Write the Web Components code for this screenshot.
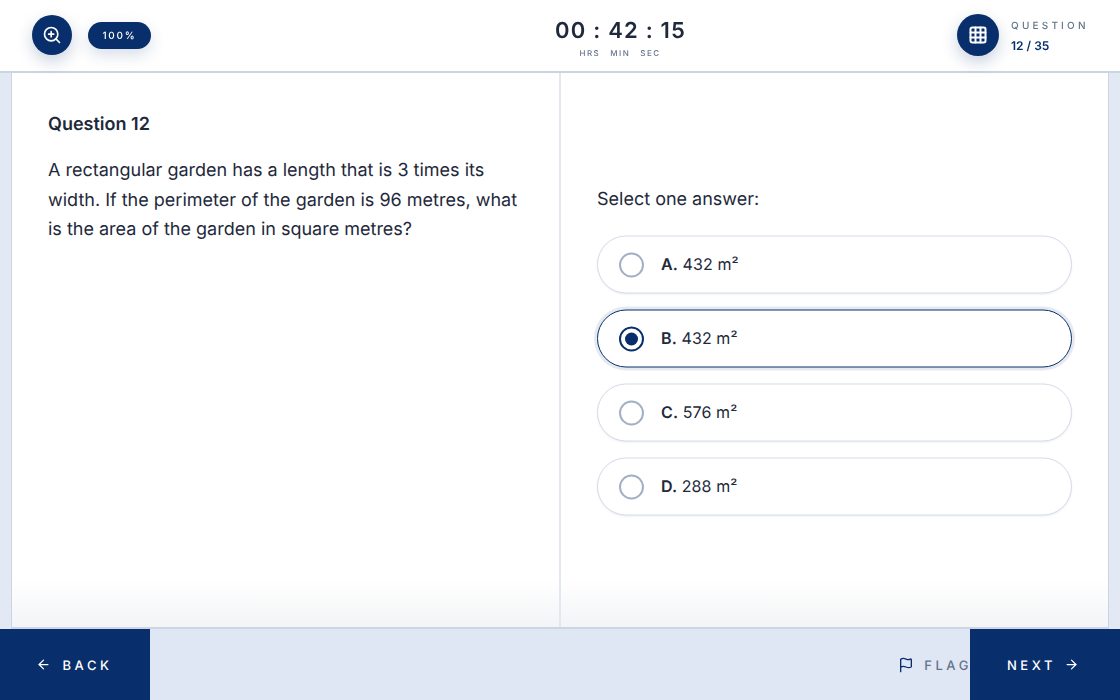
<!DOCTYPE html>
<html lang="en">
<head>
<meta charset="utf-8">
<title>Exam</title>
<style>
    html, body {
        margin: 0;
        height: 100%;
    }
    body {
        font-family: Inter, "Liberation Sans", sans-serif;
        color: #1e293b;
        background: #e2e8f4;
        text-rendering: geometricPrecision;
        -webkit-font-smoothing: antialiased;
    }
</style>
</head>
<body>
<exam-app>
    <exam-header slot="header"></exam-header>
    <question-pane slot="left" heading="Question 12">
        A rectangular garden has a length that is 3 times its width. If the perimeter of the garden is 96 metres, what is the area of the garden in square metres?
    </question-pane>
    <answer-pane slot="right" prompt="Select one answer:">
        <answer-option letter="A.">432 m²</answer-option>
        <answer-option letter="B." selected>432 m²</answer-option>
        <answer-option letter="C.">576 m²</answer-option>
        <answer-option letter="D.">288 m²</answer-option>
    </answer-pane>
    <exam-footer slot="footer"></exam-footer>
</exam-app>
<script>
class ExamApp extends HTMLElement {
    constructor() {
        super();
        const shadow = this.attachShadow({mode: "open"});
        shadow.innerHTML = `
        <style>
        :host {
            display: flex;
            flex-direction: column;
            height: 700px;
            overflow: hidden;
        }
        main {
            flex: 1;
            min-height: 0;
            display: flex;
            padding: 0 11px;
        }
        .card {
            flex: 1;
            display: grid;
            grid-template-columns: 549px 1fr;
            background: linear-gradient(to bottom, #fff calc(100% - 48px), #f3f4f6);
            border: solid #cdd4e3;
            border-width: 0 1px 2px 1px;
            transform: translateZ(0);
        }
        </style>
        <slot name="header"></slot>
        <main>
            <div class="card">
                <slot name="left"></slot>
                <slot name="right"></slot>
            </div>
        </main>
        <slot name="footer"></slot>
        `
    }
}

class ExamHeader extends HTMLElement {
    constructor() {
        super();
        const shadow = this.attachShadow({mode: "open"});
        shadow.innerHTML = `
        <style>
        :host {
            display: grid;
            grid-template-columns: 523px auto 1fr;
            align-items: center;
            height: 70px;
            background: #fff;
            border-bottom: 2px solid #cbd5e1;
            position: relative;
            z-index: 1;
            padding: 0 32px 1px;
        }
        .left, .right {
            display: flex;
            align-items: center;
        }
        .left {
            gap: 16px;
        }
        .right {
            justify-content: flex-end;
            gap: 12px;
        }
        .round {
            display: flex;
            align-items: center;
            justify-content: center;
            border-radius: 50%;
            background: #082f6b;
            box-shadow: 0 6px 16px rgba(8, 47, 107, .22);
        }
        .zoom {
            width: 40px;
            height: 40px;
        }
        .grid {
            width: 42px;
            height: 42px;
        }
        .pill {
            box-sizing: border-box;
            display: flex;
            align-items: center;
            justify-content: center;
            width: 63px;
            height: 27px;
            padding-top: 1px;
            border-radius: 14px;
            background: #082f6b;
            color: #fff;
            font-size: 10px;
            font-weight: 500;
            letter-spacing: 1.8px;
            box-shadow: 0 6px 16px rgba(8, 47, 107, .16);
        }
        .timer {
            text-align: center;
        }
        .digits {
            font-size: 22px;
            font-weight: 600;
            letter-spacing: 1.2px;
            line-height: 28px;
            margin-top: 5px;
        }
        .units {
            display: flex;
            justify-content: center;
            gap: 10px;
            margin-top: 3px;
            margin-left: -1px;
            font-size: 8px;
            font-weight: 500;
            letter-spacing: 1.5px;
            line-height: 10px;
            color: #64748b;
        }
        .count {
            width: 77px;
        }
        .label {
            font-size: 10px;
            font-weight: 500;
            letter-spacing: 3.2px;
            color: #64748b;
            line-height: 12px;
            margin-top: 3px;
        }
        .value {
            margin-top: 6px;
            font-size: 12px;
            font-weight: 600;
            color: #082f6b;
            line-height: 16px;
        }
        </style>
        <div class="left">
            <div class="round zoom">
                <svg width="20" height="20" viewBox="0 0 24 24" fill="none" stroke="#fff" stroke-width="2" stroke-linecap="round" stroke-linejoin="round">
                    <circle cx="11" cy="11" r="8"></circle>
                    <path d="m21 21-4.3-4.3"></path>
                    <path d="M11 8v6"></path>
                    <path d="M8 11h6"></path>
                </svg>
            </div>
            <div class="pill">100%</div>
        </div>
        <div class="timer">
            <div class="digits">00 : 42 : 15</div>
            <div class="units"><span>HRS</span><span>MIN</span><span>SEC</span></div>
        </div>
        <div class="right">
            <div class="round grid">
                <svg width="20" height="20" viewBox="0 0 24 24" fill="none" stroke="#fff" stroke-width="2.4" stroke-linecap="round" stroke-linejoin="round">
                    <rect x="3" y="3" width="18" height="18" rx="2"></rect>
                    <path d="M3 9h18"></path>
                    <path d="M3 15h18"></path>
                    <path d="M9 3v18"></path>
                    <path d="M15 3v18"></path>
                </svg>
            </div>
            <div class="count">
                <div class="label">QUESTION</div>
                <div class="value">12 / 35</div>
            </div>
        </div>
        `
    }
}

class QuestionPane extends HTMLElement {
    constructor() {
        super();
        const shadow = this.attachShadow({mode: "open"});
        shadow.innerHTML = `
        <style>
        :host {
            display: block;
            padding: 40px 36px;
            border-right: 2px solid #e2e8f0;
        }
        h2 {
            margin: 0 0 19px;
            font-size: 18px;
            font-weight: 600;
            line-height: 24px;
        }
        p {
            margin: 0;
            font-size: 18px;
            line-height: 29.5px;
        }
        </style>
        <h2></h2>
        <p><slot></slot></p>
        `
        shadow.querySelector("h2").textContent = this.getAttribute("heading");
    }
}

class AnswerPane extends HTMLElement {
    constructor() {
        super();
        const shadow = this.attachShadow({mode: "open"});
        shadow.innerHTML = `
        <style>
        :host {
            display: flex;
            flex-direction: column;
            justify-content: center;
            padding: 0 36px;
        }
        .prompt {
            margin-bottom: 20px;
            font-size: 18px;
            line-height: 30px;
        }
        .list {
            display: flex;
            flex-direction: column;
            gap: 16px;
        }
        </style>
        <div class="prompt"></div>
        <div class="list"><slot></slot></div>
        `
        shadow.querySelector(".prompt").textContent = this.getAttribute("prompt");
    }
}

class AnswerOption extends HTMLElement {
    constructor() {
        super();
        const shadow = this.attachShadow({mode: "open"});
        shadow.innerHTML = `
        <style>
        :host {
            display: flex;
            align-items: center;
            gap: 17px;
            box-sizing: border-box;
            height: 58px;
            padding: 0 21px;
            border: 1px solid #d5dbe8;
            border-radius: 29px;
            background: #fff;
            box-shadow: 0 1px 2px rgba(100, 116, 139, .12);
            font-size: 16px;
            transform: translateY(.5px);
        }
        :host([selected]) {
            border-color: #082f6b;
            box-shadow: 0 0 0 3px rgba(8, 47, 107, .1);
        }
        .radio {
            box-sizing: border-box;
            flex: none;
            display: flex;
            align-items: center;
            justify-content: center;
            width: 25px;
            height: 25px;
            border: 2px solid #a3afc4;
            border-radius: 50%;
        }
        :host([selected]) .radio {
            border-color: #082f6b;
        }
        :host([selected]) .radio::after {
            content: "";
            width: 13px;
            height: 13px;
            border-radius: 50%;
            background: #082f6b;
        }
        .text {
            margin-bottom: 2px;
            letter-spacing: .1px;
        }
        b {
            font-weight: 600;
        }
        </style>
        <span class="radio"></span>
        <span class="text"><b></b> <slot></slot></span>
        `
        shadow.querySelector("b").textContent = this.getAttribute("letter");
    }
}

class ExamFooter extends HTMLElement {
    constructor() {
        super();
        const shadow = this.attachShadow({mode: "open"});
        shadow.innerHTML = `
        <style>
        :host {
            display: flex;
            align-items: stretch;
            height: 71px;
            background: #e0e7f4;
            font-size: 13px;
            font-weight: 500;
            letter-spacing: 3.6px;
        }
        span {
            padding-top: 2px;
        }
        .nav {
            box-sizing: border-box;
            display: flex;
            align-items: center;
            justify-content: center;
            width: 150px;
            background: #082f6b;
            color: #fff;
        }
        .back {
            gap: 11px;
            padding-right: 1px;
        }
        .next {
            position: relative;
            gap: 8px;
            padding-right: 4px;
        }
        .flag {
            margin-left: auto;
            margin-right: -2px;
            display: flex;
            align-items: center;
            gap: 10px;
            color: #64748b;
        }
        </style>
        <div class="nav back">
            <svg width="15" height="15" viewBox="0 0 24 24" fill="none" stroke="#fff" stroke-width="2" stroke-linecap="round" stroke-linejoin="round">
                <path d="m12 19-7-7 7-7"></path>
                <path d="M19 12H5"></path>
            </svg>
            <span>BACK</span>
        </div>
        <div class="flag">
            <svg width="16" height="16" viewBox="0 0 24 24" fill="none" stroke="#082f6b" stroke-width="2" stroke-linecap="round" stroke-linejoin="round">
                <path d="M4 22V4a1 1 0 0 1 .4-.8A6 6 0 0 1 8 2c3 0 5 2 7.3 2a6 6 0 0 0 3.1-.9 1 1 0 0 1 1.6.8v10.3a1 1 0 0 1-.4.8A6 6 0 0 1 16 16c-3 0-5-2-8-2a6 6 0 0 0-4 1.5"></path>
            </svg>
            <span>FLAG</span>
        </div>
        <div class="nav next">
            <span>NEXT</span>
            <svg width="15" height="15" viewBox="0 0 24 24" fill="none" stroke="#fff" stroke-width="2" stroke-linecap="round" stroke-linejoin="round">
                <path d="M5 12h14"></path>
                <path d="m12 5 7 7-7 7"></path>
            </svg>
        </div>
        `
    }
}

customElements.define("exam-app", ExamApp);
customElements.define("exam-header", ExamHeader);
customElements.define("question-pane", QuestionPane);
customElements.define("answer-pane", AnswerPane);
customElements.define("answer-option", AnswerOption);
customElements.define("exam-footer", ExamFooter);
</script>
</body>
</html>
